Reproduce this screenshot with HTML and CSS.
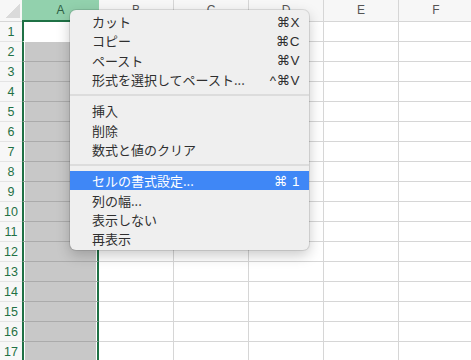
FILE: index.html
```html
<!doctype html>
<html>
<head>
<meta charset="utf-8">
<title>Sheet</title>
<link rel="stylesheet" href="styles.css">
</head>
<body>
<div class="sheet">
  <div class="corner"></div>
  <div class="colhead sel">A</div>
  <div class="colhead">B</div>
  <div class="colhead">C</div>
  <div class="colhead">D</div>
  <div class="colhead">E</div>
  <div class="colhead">F</div>

  <div class="rowhead">1</div><div class="cell sel active"></div><div class="cell"></div><div class="cell"></div><div class="cell"></div><div class="cell"></div><div class="cell"></div>
  <div class="rowhead">2</div><div class="cell sel"></div><div class="cell"></div><div class="cell"></div><div class="cell"></div><div class="cell"></div><div class="cell"></div>
  <div class="rowhead">3</div><div class="cell sel"></div><div class="cell"></div><div class="cell"></div><div class="cell"></div><div class="cell"></div><div class="cell"></div>
  <div class="rowhead">4</div><div class="cell sel"></div><div class="cell"></div><div class="cell"></div><div class="cell"></div><div class="cell"></div><div class="cell"></div>
  <div class="rowhead">5</div><div class="cell sel"></div><div class="cell"></div><div class="cell"></div><div class="cell"></div><div class="cell"></div><div class="cell"></div>
  <div class="rowhead">6</div><div class="cell sel"></div><div class="cell"></div><div class="cell"></div><div class="cell"></div><div class="cell"></div><div class="cell"></div>
  <div class="rowhead">7</div><div class="cell sel"></div><div class="cell"></div><div class="cell"></div><div class="cell"></div><div class="cell"></div><div class="cell"></div>
  <div class="rowhead">8</div><div class="cell sel"></div><div class="cell"></div><div class="cell"></div><div class="cell"></div><div class="cell"></div><div class="cell"></div>
  <div class="rowhead">9</div><div class="cell sel"></div><div class="cell"></div><div class="cell"></div><div class="cell"></div><div class="cell"></div><div class="cell"></div>
  <div class="rowhead">10</div><div class="cell sel"></div><div class="cell"></div><div class="cell"></div><div class="cell"></div><div class="cell"></div><div class="cell"></div>
  <div class="rowhead">11</div><div class="cell sel"></div><div class="cell"></div><div class="cell"></div><div class="cell"></div><div class="cell"></div><div class="cell"></div>
  <div class="rowhead">12</div><div class="cell sel"></div><div class="cell"></div><div class="cell"></div><div class="cell"></div><div class="cell"></div><div class="cell"></div>
  <div class="rowhead">13</div><div class="cell sel"></div><div class="cell"></div><div class="cell"></div><div class="cell"></div><div class="cell"></div><div class="cell"></div>
  <div class="rowhead">14</div><div class="cell sel"></div><div class="cell"></div><div class="cell"></div><div class="cell"></div><div class="cell"></div><div class="cell"></div>
  <div class="rowhead">15</div><div class="cell sel"></div><div class="cell"></div><div class="cell"></div><div class="cell"></div><div class="cell"></div><div class="cell"></div>
  <div class="rowhead">16</div><div class="cell sel"></div><div class="cell"></div><div class="cell"></div><div class="cell"></div><div class="cell"></div><div class="cell"></div>
  <div class="rowhead">17</div><div class="cell sel"></div><div class="cell"></div><div class="cell"></div><div class="cell"></div><div class="cell"></div><div class="cell"></div>
</div>

<ul class="menu">
  <li class="item"><span>カット</span><span class="key">⌘X</span></li>
  <li class="item"><span>コピー</span><span class="key">⌘C</span></li>
  <li class="item"><span>ペースト</span><span class="key">⌘V</span></li>
  <li class="item"><span>形式を選択してペースト...</span><span class="key">^⌘V</span></li>
  <li class="sep"></li>
  <li class="item"><span>挿入</span></li>
  <li class="item"><span>削除</span></li>
  <li class="item"><span>数式と値のクリア</span></li>
  <li class="sep"></li>
  <li class="item hover"><span>セルの書式設定...</span><span class="key">⌘ 1</span></li>
  <li class="item"><span>列の幅...</span></li>
  <li class="item"><span>表示しない</span></li>
  <li class="item"><span>再表示</span></li>
</ul>
</body>
</html>
```

FILE: styles.css
```css
:root {
  --green: #1f7145;
  --greenLight: #92d1ad;
  --grid: #d6d6d6;
  --headBg: #f7f7f7;
  --selGray: #c8c8c8;
}

* {
  margin: 0;
  padding: 0;
  box-sizing: border-box;
}

html,
body {
  width: 471px;
  height: 360px;
  overflow: hidden;
  background: #fff;
}

body {
  font-family: "Liberation Sans", Arial, sans-serif;
  position: relative;
}

ul {
  list-style: none;
}

/* spreadsheet grid */
.sheet {
  display: grid;
  grid-template-columns: 22px 77px repeat(5, 75px);
  grid-template-rows: 22px;
  grid-auto-rows: 20px;
}

.corner {
  background: linear-gradient(135deg, transparent 50%, #dadada 50%) right 2px bottom 3px / 15px 14px no-repeat,
    var(--headBg);
  border-bottom: 1px solid var(--grid);
}

.colhead {
  background: var(--headBg);
  border-right: 1px solid var(--grid);
  border-bottom: 1px solid var(--grid);
  color: #555;
  font-size: 12px;
  line-height: 20px;
  text-align: center;
}

.colhead.sel {
  background: var(--greenLight);
  border-right: 0;
  border-bottom: 2px solid var(--green);
  color: #2e5e44;
}

.rowhead {
  background: var(--headBg);
  border-bottom: 1px solid #e4e4e4;
  color: var(--green);
  font-size: 12.5px;
  line-height: 21px;
  text-align: center;
}

.cell {
  border-right: 1px solid var(--grid);
  border-bottom: 1px solid var(--grid);
}

.cell.sel {
  background: var(--selGray);
  border-left: 2px solid var(--green);
  border-right: 2px solid var(--green);
  border-bottom: 1px solid #ababab;
  box-shadow: inset 1px 0 #fff, inset -1px 0 #fff;
}

.cell.sel.active {
  background: #fff;
  border-bottom: 1px solid #fff;
}

/* context menu */
.menu {
  position: absolute;
  left: 70px;
  top: 10px;
  width: 239px;
  padding: 2px 0;
  background: #efefef;
  border-radius: 6px;
  box-shadow: 0 0 0 1px rgba(0, 0, 0, 0.1), 0 5px 14px rgba(0, 0, 0, 0.22);
  font-family: "Noto Sans CJK JP", "DejaVu Sans", sans-serif;
  font-size: 13px;
  color: #2f2f2f;
}

.item {
  display: flex;
  justify-content: space-between;
  align-items: center;
  height: 19.3px;
  padding: 0 9px 0 22px;
  white-space: nowrap;
}

.item.hover {
  background: #3f87f6;
  color: #fff;
}

.key {
  font-family: "Liberation Sans", "DejaVu Sans", sans-serif;
  font-size: 13.5px;
  letter-spacing: 0.5px;
}

.sep {
  height: 12px;
  display: flex;
  align-items: center;
}

.sep::before {
  content: "";
  display: block;
  width: 100%;
  height: 2px;
  background: #dcdcdc;
}
```
